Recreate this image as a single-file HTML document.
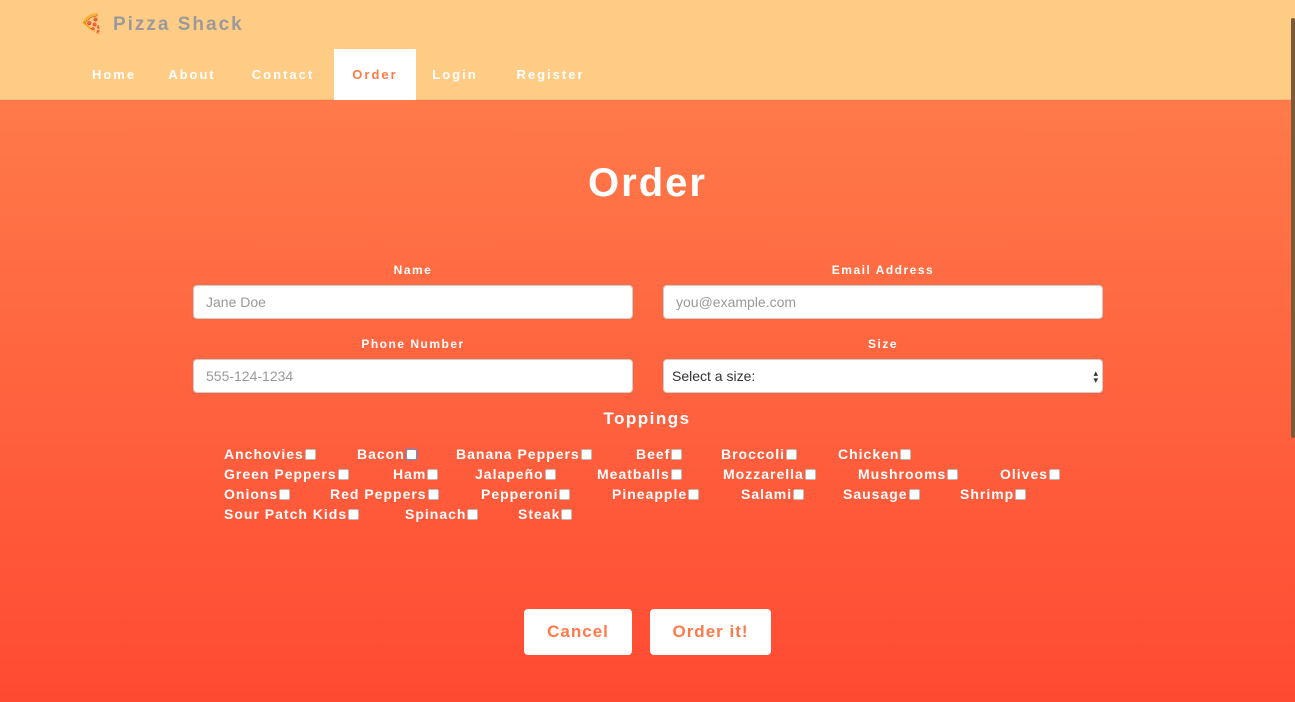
<!DOCTYPE html>
<html><head><meta charset="utf-8"><style>
*{box-sizing:border-box;margin:0;padding:0}
body{width:1295px;height:702px;overflow:hidden;font-family:"Liberation Sans",sans-serif;background:linear-gradient(#ff7a4a 100px,#ff4a32 702px);position:relative}
.hdr{position:absolute;left:0;top:0;width:1295px;height:100px;background:#ffcc85;border-bottom:1px solid #f5b77a}
.brand{position:absolute;left:80px;top:12px;font-size:19px;font-weight:900;color:#9a9a9a;letter-spacing:2px}
.nav a{position:absolute;top:49px;height:51px;line-height:51px;font-size:13px;font-weight:900;color:#fff;letter-spacing:2px;text-decoration:none;text-align:center}
.nav a.act{background:#fff;color:#ff7a4a}
h1{position:absolute;top:161px;width:100%;text-align:center;font-size:40px;font-weight:900;color:#fff;letter-spacing:2px}
.lbl{position:absolute;font-size:12px;font-weight:900;color:#fff;letter-spacing:1.5px;text-align:center;width:440px}
.in{position:absolute;width:440px;height:34px;background:#fff;border:1px solid #ccc;border-radius:4px;font-size:14px;color:#999;padding:8px 12px}
.t{position:absolute;font-size:14px;font-weight:bold;color:#fff;letter-spacing:1px;white-space:nowrap;line-height:16px}
.t i{display:inline-block;width:11px;height:11px;background:#fff;border-radius:2px;border:1px solid #bbb;vertical-align:-1px;margin-left:1px}
.btn{position:absolute;top:609px;height:46px;background:#fff;border-radius:4px;color:#ff7a4a;font-size:17px;font-weight:900;letter-spacing:1px;text-align:center;line-height:46px}
.sb{position:absolute;right:0;top:18px;width:4px;height:420px;background:#7a5a3a;border-radius:2px}
</style></head><body>
<div class="hdr"><div class="brand"><span style="color:#c8502a">🍕</span> Pizza Shack</div>
<div class="nav"><a style="left:89px;width:50px">Home</a><a style="left:164px;width:56px">About</a><a style="left:245px;width:76px">Contact</a><a class="act" style="left:334px;width:82px">Order</a><a style="left:428px;width:54px">Login</a><a style="left:508px;width:85px">Register</a></div>
<div class="sb"></div></div>
<h1>Order</h1>
<div class="lbl" style="left:193px;top:263px">Name</div>
<div class="lbl" style="left:663px;top:263px">Email Address</div>
<div class="in" style="left:193px;top:285px">Jane Doe</div>
<div class="in" style="left:663px;top:285px">you@example.com</div>
<div class="lbl" style="left:193px;top:337px">Phone Number</div>
<div class="lbl" style="left:663px;top:337px">Size</div>
<div class="in" style="left:193px;top:359px">555-124-1234</div>
<div class="in" style="left:663px;top:359px;color:#333;padding-left:8px">Select a size:<span style="position:absolute;right:4px;top:8px;font-size:9px">▴</span><span style="position:absolute;right:4px;top:15px;font-size:9px">▾</span></div>
<div class="lbl" style="left:427px;top:409px;font-size:17px">Toppings</div>
<div class="t" style="left:224px;top:446px">Anchovies<i></i></div>
<div class="t" style="left:357px;top:446px">Bacon<i style="border-color:#7a8fc0;box-shadow:0 0 2px #6a80c0"></i></div>
<div class="t" style="left:456px;top:446px">Banana Peppers<i></i></div>
<div class="t" style="left:636px;top:446px">Beef<i></i></div>
<div class="t" style="left:721px;top:446px">Broccoli<i></i></div>
<div class="t" style="left:838px;top:446px">Chicken<i></i></div>
<div class="t" style="left:224px;top:466px">Green Peppers<i></i></div>
<div class="t" style="left:393px;top:466px">Ham<i></i></div>
<div class="t" style="left:475px;top:466px">Jalapeño<i></i></div>
<div class="t" style="left:597px;top:466px">Meatballs<i></i></div>
<div class="t" style="left:723px;top:466px">Mozzarella<i></i></div>
<div class="t" style="left:858px;top:466px">Mushrooms<i></i></div>
<div class="t" style="left:1000px;top:466px">Olives<i></i></div>
<div class="t" style="left:224px;top:486px">Onions<i></i></div>
<div class="t" style="left:330px;top:486px">Red Peppers<i></i></div>
<div class="t" style="left:481px;top:486px">Pepperoni<i></i></div>
<div class="t" style="left:612px;top:486px">Pineapple<i></i></div>
<div class="t" style="left:741px;top:486px">Salami<i></i></div>
<div class="t" style="left:843px;top:486px">Sausage<i></i></div>
<div class="t" style="left:960px;top:486px">Shrimp<i></i></div>
<div class="t" style="left:224px;top:506px">Sour Patch Kids<i></i></div>
<div class="t" style="left:405px;top:506px">Spinach<i></i></div>
<div class="t" style="left:518px;top:506px">Steak<i></i></div>
<div class="btn" style="left:524px;width:108px">Cancel</div>
<div class="btn" style="left:650px;width:121px">Order it!</div>
</body></html>
